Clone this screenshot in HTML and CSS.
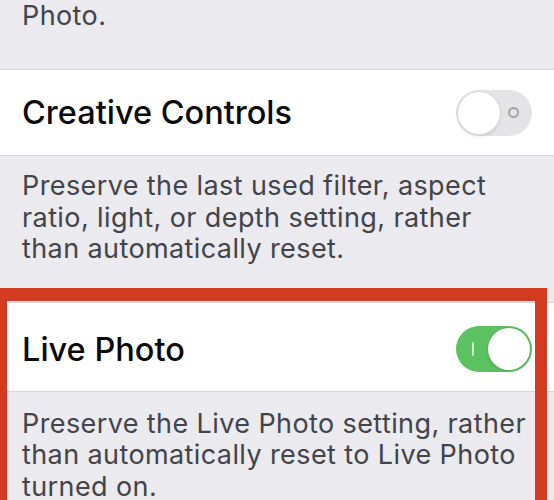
FILE: index.html
```html
<!DOCTYPE html>
<html lang="en">

<head>
    <meta charset="UTF-8">
    <meta name="viewport" content="width=device-width, initial-scale=1.0">
    <title>Preserve Settings</title>
    <link rel="stylesheet" href="styles.css">
</head>

<body>

    <div class="settings">
        <div class="footer footer-top">
            <p>Photo.</p>
        </div>

        <div class="row">
            <span class="row-title">Creative Controls</span>
            <span class="switch">
                <span class="switch-knob"></span>
                <span class="switch-mark"></span>
            </span>
        </div>
        <div class="footer">
            <p>Preserve the last used filter, aspect ratio, light, or depth setting, rather than automatically reset.</p>
        </div>

        <div class="row row-live">
            <span class="row-title">Live Photo</span>
            <span class="switch on">
                <span class="switch-mark"></span>
                <span class="switch-knob"></span>
            </span>
        </div>
        <div class="footer footer-live">
            <p>Preserve the Live Photo setting, rather than automatically reset to Live Photo turned on.</p>
        </div>

        <!-- red annotation frame drawn over the Live Photo group -->
        <div class="highlight"></div>
    </div>

</body>

</html>
```

FILE: styles.css
```css
* {
    box-sizing: border-box;
    margin: 0;
    padding: 0;
}

html,
body {
    height: 100%;
    overflow: hidden;
}

body {
    background-color: #eaeaef;
    font-family: 'Inter', 'Liberation Sans', sans-serif;
}

.settings {
    position: relative;
}

.footer {
    padding: 14px 22px 37px;
    color: #434348;
    font-size: 27px;
    line-height: 31.5px;
    letter-spacing: 0.4px;
}

.footer-top {
    height: 69px;
    padding-top: 0;
}

.footer-live {
    padding-top: 16px;
}

.row {
    display: flex;
    justify-content: space-between;
    align-items: center;
    height: 87px;
    padding: 0 22px;
    background-color: #fff;
    border-top: 1px solid #d3d3d8;
    border-bottom: 1px solid #d3d3d8;
}

.row-live {
    height: 90px;
    padding-top: 5px;
}

.row-title {
    font-size: 32.5px;
    font-weight: 500;
    color: #0a0a0a;
}

.switch {
    display: flex;
    justify-content: space-between;
    align-items: center;
    width: 76px;
    height: 46px;
    padding: 2px;
    border-radius: 23px;
    background-color: #e4e4e7;
}

.switch-knob {
    width: 42px;
    height: 42px;
    border-radius: 50%;
    background-color: #fff;
    box-shadow: 0 0 0 1px #d6d6da, 0 2px 4px rgba(0, 0, 0, 0.12);
}

.switch-mark {
    width: 11px;
    height: 11px;
    margin-right: 11px;
    border: 2px solid #a3a3a8;
    border-radius: 50%;
}

.switch.on {
    background-color: #5cc160;
}

.switch.on .switch-knob {
    box-shadow: 0 0 0 1px #55b658, 0 2px 4px rgba(0, 0, 0, 0.1);
}

.switch.on .switch-mark {
    width: 2px;
    height: 14px;
    margin: 0 0 0 14px;
    border: none;
    border-radius: 1px;
    background-color: rgba(255, 255, 255, 0.7);
}

.highlight {
    position: absolute;
    top: 288px;
    left: -5px;
    right: 7px;
    height: 320px;
    border: 12px solid #d23b22;
    border-top-width: 13px;
}
```
